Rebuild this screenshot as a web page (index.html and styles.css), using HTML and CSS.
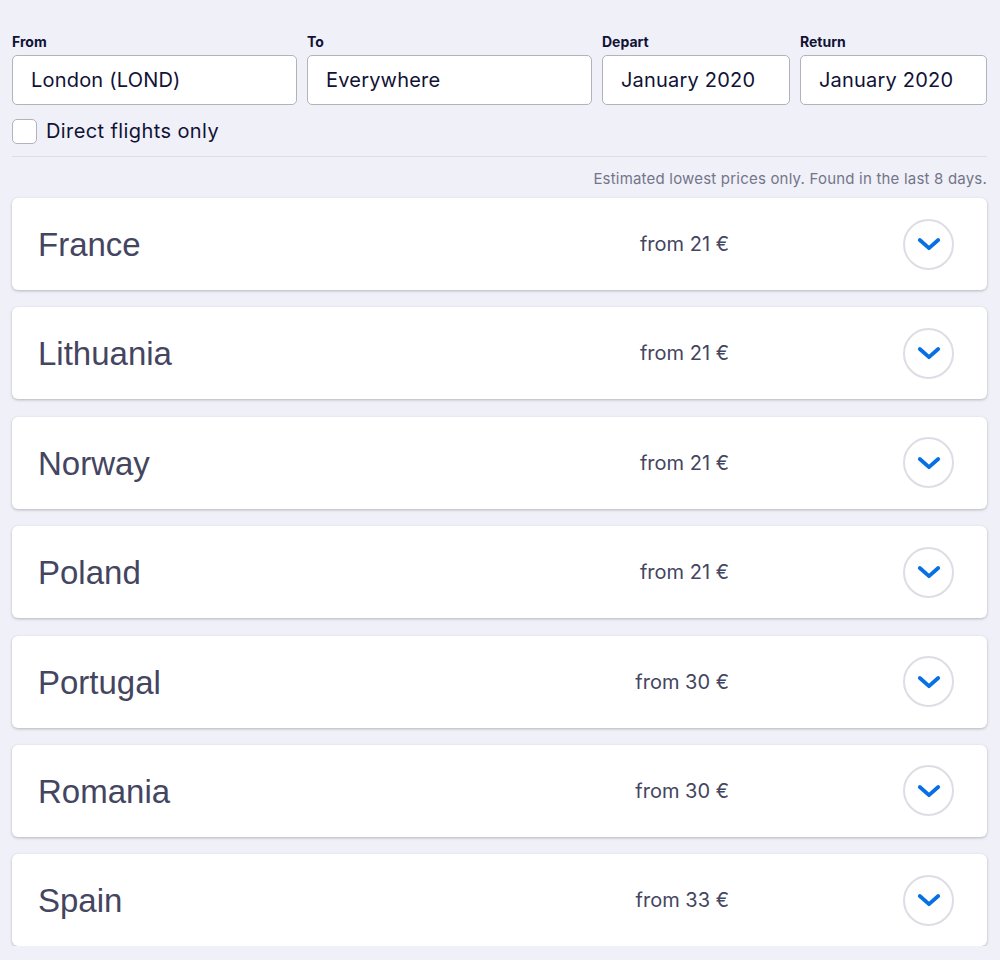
FILE: index.html
```html
<!DOCTYPE html>
<html>
<head>
<meta charset="utf-8">
<link rel="stylesheet" href="styles.css">
</head>
<body>
<div class="page">
  <div class="search">
    <div class="field">
      <label class="label">From</label>
      <div class="input">London (LOND)</div>
    </div>
    <div class="field">
      <label class="label">To</label>
      <div class="input">Everywhere</div>
    </div>
    <div class="field">
      <label class="label">Depart</label>
      <div class="input">January 2020</div>
    </div>
    <div class="field">
      <label class="label">Return</label>
      <div class="input">January 2020</div>
    </div>
  </div>
  <div class="direct">
    <span class="checkbox"></span>
    <span class="direct-text">Direct flights only</span>
  </div>
  <div class="divider"></div>
  <p class="note">Estimated lowest prices only. Found in the last 8 days.</p>
  <div class="list">
    <div class="card"><span class="country">France</span><span class="price">from 21 €</span><span class="toggle"><svg viewBox="0 0 24 24" width="24" height="24"><path d="M2.8 8 L12 16.2 L21.2 8" fill="none" stroke="#0770e3" stroke-width="3.8" stroke-linecap="round" stroke-linejoin="round"/></svg></span></div>
    <div class="card"><span class="country">Lithuania</span><span class="price">from 21 €</span><span class="toggle"><svg viewBox="0 0 24 24" width="24" height="24"><path d="M2.8 8 L12 16.2 L21.2 8" fill="none" stroke="#0770e3" stroke-width="3.8" stroke-linecap="round" stroke-linejoin="round"/></svg></span></div>
    <div class="card"><span class="country">Norway</span><span class="price">from 21 €</span><span class="toggle"><svg viewBox="0 0 24 24" width="24" height="24"><path d="M2.8 8 L12 16.2 L21.2 8" fill="none" stroke="#0770e3" stroke-width="3.8" stroke-linecap="round" stroke-linejoin="round"/></svg></span></div>
    <div class="card"><span class="country">Poland</span><span class="price">from 21 €</span><span class="toggle"><svg viewBox="0 0 24 24" width="24" height="24"><path d="M2.8 8 L12 16.2 L21.2 8" fill="none" stroke="#0770e3" stroke-width="3.8" stroke-linecap="round" stroke-linejoin="round"/></svg></span></div>
    <div class="card"><span class="country">Portugal</span><span class="price">from 30 €</span><span class="toggle"><svg viewBox="0 0 24 24" width="24" height="24"><path d="M2.8 8 L12 16.2 L21.2 8" fill="none" stroke="#0770e3" stroke-width="3.8" stroke-linecap="round" stroke-linejoin="round"/></svg></span></div>
    <div class="card"><span class="country">Romania</span><span class="price">from 30 €</span><span class="toggle"><svg viewBox="0 0 24 24" width="24" height="24"><path d="M2.8 8 L12 16.2 L21.2 8" fill="none" stroke="#0770e3" stroke-width="3.8" stroke-linecap="round" stroke-linejoin="round"/></svg></span></div>
    <div class="card"><span class="country">Spain</span><span class="price">from 33 €</span><span class="toggle"><svg viewBox="0 0 24 24" width="24" height="24"><path d="M2.8 8 L12 16.2 L21.2 8" fill="none" stroke="#0770e3" stroke-width="3.8" stroke-linecap="round" stroke-linejoin="round"/></svg></span></div>
  </div>
</div>
</body>
</html>
```
FILE: styles.css
```css
* { box-sizing: border-box; }
html, body {
  margin: 0;
  padding: 0;
  background: #eff0f8;
  font-family: Inter, "Noto Sans", "Liberation Sans", sans-serif;
  color: #111236;
}
.page {
  padding: 33px 13px 0 12px;
}
.search {
  display: grid;
  grid-template-columns: 285px 285px 188px 187px;
  column-gap: 10px;
  justify-content: space-between;
}
.field {
  display: flex;
  flex-direction: column;
}
.label {
  font-size: 14px;
  font-weight: 700;
  line-height: 18px;
  margin-bottom: 4px;
  color: #111236;
}
.input {
  height: 50px;
  background: #fff;
  border: 1px solid #b2b2bf;
  border-radius: 5px;
  padding: 0 18px;
  display: flex;
  align-items: center;
  font-size: 20px;
  letter-spacing: 0.2px;
  color: #111236;
}
.direct {
  display: flex;
  align-items: center;
  margin-top: 13px;
  height: 26px;
}
.checkbox {
  width: 25px;
  height: 25px;
  background: #fff;
  border: 1px solid #b2b2bf;
  border-radius: 5px;
  margin-right: 9px;
}
.direct-text {
  font-size: 20px;
  letter-spacing: 0.4px;
  color: #111236;
}
.divider {
  height: 1px;
  background: #dcdde6;
  margin-top: 12px;
}
.note {
  margin: 13px 0 10px;
  text-align: right;
  font-size: 15px;
  letter-spacing: 0.2px;
  line-height: 18px;
  color: #74758a;
}
.list {
  display: flex;
  flex-direction: column;
  gap: 17.4px;
}
.card {
  height: 92px;
  background: #fff;
  border-radius: 6px;
  box-shadow: 0 1px 3px rgba(37, 32, 31, 0.28);
  display: flex;
  align-items: center;
  padding: 0 33px 0 26px;
}
.country {
  flex: 1;
  font-size: 33px;
  color: #444560;
  font-family: "Liberation Sans", Arial, sans-serif;
  padding-top: 2px;
}
.price {
  font-size: 20px;
  color: #444560;
  margin-right: 174px;
}
.toggle {
  width: 51px;
  height: 51px;
  border-radius: 50%;
  border: 2px solid #dddde5;
  display: flex;
  align-items: center;
  justify-content: center;
}
```
